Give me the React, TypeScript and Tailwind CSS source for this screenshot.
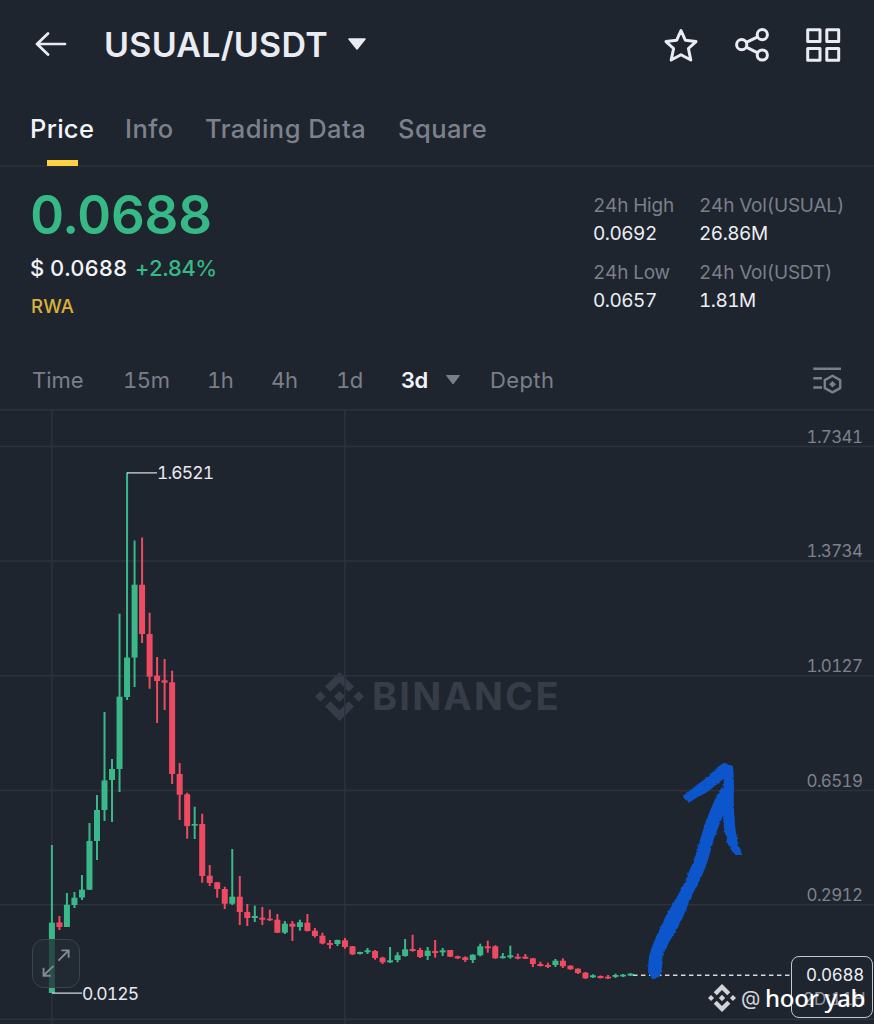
import React from "react";

type Candle = [up: 0 | 1, high: number, top: number, bottom: number, low: number];

const CANDLES: Candle[] = [
  [1, 845, 922.7, 993, 993], [0, 916, 922.5, 927, 930], [1, 893, 904.7, 927, 927], [1, 892, 897.7, 905, 908],
  [1, 875, 889.7, 897.5, 900], [1, 823, 841, 889.7, 890], [1, 795, 810, 841, 860], [1, 712, 780.5, 810, 821],
  [1, 759, 769, 780, 822], [1, 613.7, 696.7, 769, 792], [1, 472.5, 657.5, 697, 700], [1, 540.5, 584.7, 657.5, 687],
  [0, 537.5, 584.7, 634, 643], [0, 612.7, 634, 676.7, 688.7], [0, 657, 675.7, 681, 723], [0, 659, 680.3, 682.7, 710],
  [0, 670.7, 682.3, 774, 784], [0, 763, 774, 794.7, 820], [0, 792.7, 794.3, 826, 838.7], [1, 806.7, 824, 825.7, 839],
  [0, 813.7, 824, 876, 882.7], [0, 865, 875.7, 883, 886], [0, 882, 882.3, 889, 897.7], [0, 886.7, 889, 903.7, 909],
  [1, 849, 896.7, 903.7, 905], [0, 876, 896.7, 912, 925], [0, 904, 912, 918, 926], [1, 905.7, 916, 918, 922],
  [0, 907, 917.7, 919.7, 925], [0, 909.7, 918.7, 920.3, 921], [0, 914, 919.7, 932.7, 933], [1, 921, 923.7, 932.7, 934],
  [0, 921, 923.7, 926.7, 941], [1, 919.7, 922.3, 927, 930.7], [0, 914, 922.7, 931, 931.5], [0, 928, 930.7, 936, 937.5],
  [0, 932.7, 935.7, 943.5, 944.3], [0, 940, 943, 945, 948.7], [1, 939.7, 940, 944, 946], [0, 938, 940.3, 947, 948.7],
  [0, 946, 946.3, 954.3, 955], [1, 951.7, 952, 953.9, 954.5], [1, 948, 950.3, 952.2, 954], [0, 950, 951, 958, 959.7],
  [0, 956.7, 957.7, 962.3, 964], [1, 947, 960.3, 962.3, 963], [1, 952.3, 955.3, 960, 962.3], [1, 939, 949.3, 956, 956.7],
  [0, 934.7, 949, 951, 951.7], [0, 947.7, 950, 957, 958], [1, 947, 950.7, 956, 960], [0, 940, 951, 953, 957.7],
  [1, 948, 950.3, 952.3, 956], [0, 950, 950, 956.7, 957], [0, 955.7, 956.3, 958.3, 959], [0, 956.3, 957.3, 960, 962],
  [1, 954.3, 954.7, 960, 963], [1, 943.7, 946.3, 955.3, 956.3], [0, 940.7, 946.3, 948.3, 952.7], [0, 945.3, 946.3, 958.3, 958.7],
  [1, 953, 956.3, 958.2, 958.5], [1, 945.7, 955.3, 957.3, 958.7], [0, 953.7, 956.7, 958.5, 959.3], [0, 954, 956.7, 958.7, 959],
  [0, 958, 958.3, 964, 967], [0, 961.7, 964, 966, 966.5], [0, 962.7, 965, 966.9, 968], [1, 959, 960.7, 965, 967],
  [0, 958.3, 960.7, 966.3, 968], [0, 965.3, 965.7, 969.3, 969.7], [0, 968.3, 968.7, 973, 974], [0, 972, 972.7, 978.3, 979],
  [1, 974.3, 975.3, 977.3, 978], [0, 975.5, 976, 978.1, 978.5], [0, 975, 976.7, 978.5, 979], [1, 973.7, 975, 976.9, 978],
  [1, 974, 974.7, 976.4, 977], [1, 973, 973.7, 975.6, 976],
];

const GRID_Y = [446.5, 561, 675.7, 790.5, 904.7, 1019.3];
const AXIS: [string, number][] = [
  ["1.7341", 436.5], ["1.3734", 551], ["1.0127", 665.5], ["0.6519", 780.5], ["0.2912", 895],
];

const ARROW_SHAFT = "M649 973C649 965 649 959 651 953C655 940 662 926 668 914C674 904 679 896 684 886C689 876 692 866 696 857C699 848 701 839 704 830C708 818 713 806 718 795L722 789L728 792L724 811C720 820 717 828 713 838C710 850 707 862 702 873C699 880 696 885 693 891C688 903 683 915 677 927C672 936 666 944 663 953C662 961 661 969 659 976L654 978Z";
const ARROW_LEFT = "M684 796C691 792 697 785 704 781C710 777 715 769 721 766L725 763L732 768L730 775C723 776 715 785 707 791C701 794 694 798 688 802Z";
const ARROW_RIGHT = "M725 768L732 768C734 781 732 794 733 807C733 816 734 825 735 833C736 841 738 846 741 854L736 854C731 849 728 844 727 837C724 828 724 820 724 811Z";

function BinanceMark({ className }: { className: string }) {
  return (
    <svg viewBox="0 0 24 24" className={className} fill="currentColor">
      <path d="M12 0 19.1 7.1 16.5 9.7 12 5.2 7.5 9.7 4.9 7.1ZM12 24 4.9 16.9 7.5 14.3 12 18.8 16.5 14.3 19.1 16.9ZM0 12 2.6 9.4 5.2 12 2.6 14.6ZM18.8 12 21.4 9.4 24 12 21.4 14.6ZM9.3 12 12 9.3 14.7 12 12 14.7Z" />
    </svg>
  );
}

function Header() {
  return (
    <header className="flex h-[90px] shrink-0 items-center text-[#eaecf2]">
      <svg className="ml-[34px] h-[26px] w-[34px]" viewBox="34 32 34 26" fill="none" stroke="currentColor" strokeWidth="2.7" strokeLinecap="round" strokeLinejoin="round">
        <path d="M65 44H37M48 33.5 37 44 48 54.5" />
      </svg>
      <h1 className="ml-[36px] w-[232px] text-[34px] font-semibold leading-[40px] tracking-[0.25px] whitespace-nowrap">USUAL/USDT</h1>
      <svg className="ml-[11px] h-[14px] w-[20px]" viewBox="347 37.5 20 14">
        <path d="M349 38.5H365L357 48.5Z" fill="currentColor" stroke="currentColor" strokeWidth="1.5" strokeLinejoin="round" />
      </svg>
      <svg className="ml-auto h-[36px] w-[36px]" viewBox="663 27 36 36" fill="none" stroke="currentColor" strokeWidth="3" strokeLinejoin="round">
        <path d="M681 30.5 685.3 40.2 696 41.6 688.4 48.5 690.8 60 681 54.7 671.2 60 673.6 48.5 666 41.6 676.7 40.2Z" />
      </svg>
      <svg className="ml-[35px] h-[36px] w-[38px]" viewBox="734 27 38 36" fill="none" stroke="currentColor" strokeWidth="3">
        <circle cx="741.7" cy="44.7" r="5.1" />
        <circle cx="762.3" cy="34.7" r="5.1" />
        <circle cx="762.3" cy="55" r="5.1" />
        <path d="M746.3 42.3 757.7 36.8M746.3 47.1 757.7 52.8" />
      </svg>
      <svg className="mr-[32px] ml-[32px] h-[36px] w-[38px]" viewBox="804 27 38 36" fill="none" stroke="currentColor" strokeWidth="3" strokeLinejoin="round">
        <path d="M807.7 29.7H820V41.5H807.7ZM826.8 29.7H838.7V41.5H826.8ZM807.7 48.5H820V60.2H807.7ZM826.8 48.5H838.7V60.2H826.8Z" />
      </svg>
    </header>
  );
}

function Tabs() {
  return (
    <nav className="flex h-[77px] shrink-0 border-b-2 border-[#272d37] pl-[30px] text-[25.5px] leading-[77px] font-medium tracking-[0.45px] whitespace-nowrap text-[#7d818c]">
      <div className="relative w-[95px] tracking-[0.3px] text-[#f3f4f8]">
        Price
        <span className="absolute bottom-[-1px] left-[17px] h-[6px] w-[31px] bg-[#fcd244]" />
      </div>
      <div className="w-[80px]">Info</div>
      <div className="w-[193px]">Trading Data</div>
      <div>Square</div>
    </nav>
  );
}

function Stat({ label, value }: { label: string; value: string }) {
  return (
    <div className="h-[67px] whitespace-nowrap">
      <div className="h-[28px] text-[19px] leading-[28px] tracking-[-0.2px] text-[#7b7f8a]">{label}</div>
      <div className="h-[28px] text-[19px] leading-[28px] tracking-[-0.5px] text-[#eceef3]">{value}</div>
    </div>
  );
}

function Summary() {
  return (
    <section className="flex h-[184px] shrink-0 pl-[30px] whitespace-nowrap">
      <div className="w-[563px] pt-[18px]">
        <div className="h-[61px] text-[53px] leading-[61px] font-semibold tracking-[-0.7px] text-[#36b985]">0.0688</div>
        <div className="flex h-[45px] text-[22px] leading-[45px] font-medium">
          <span className="w-[105px] text-[#f3f4f8]">$ 0.0688</span>
          <span className="tracking-[-0.55px] text-[#36b985]">+2.84%</span>
        </div>
        <div className="ml-[1px] h-[30px] text-[18.5px] leading-[30px] font-medium tracking-[0.2px] text-[#dcb23c]">RWA</div>
      </div>
      <div className="flex pt-[25px]">
        <div className="w-[106px]">
          <Stat label="24h High" value="0.0692" />
          <Stat label="24h Low" value="0.0657" />
        </div>
        <div>
          <Stat label="24h Vol(USUAL)" value="26.86M" />
          <Stat label="24h Vol(USDT)" value="1.81M" />
        </div>
      </div>
    </section>
  );
}

function Intervals() {
  return (
    <nav className="flex h-[58px] shrink-0 items-center pl-[32px] text-[22px] leading-[58px] whitespace-nowrap text-[#7b7f8a]">
      <span className="w-[91px]">Time</span>
      <span className="w-[84px] tracking-[-0.4px]">15m</span>
      <span className="w-[64px] tracking-[-0.4px]">1h</span>
      <span className="w-[65px] tracking-[-0.2px]">4h</span>
      <span className="w-[65px] tracking-[-0.4px]">1d</span>
      <span className="w-[44px] font-semibold tracking-[-0.8px] text-[#f3f4f8]">3d</span>
      <svg className="h-[12px] w-[16px]" viewBox="0 0 16 12">
        <path d="M1.5 1.5H14.5L8 10Z" fill="currentColor" stroke="currentColor" strokeLinejoin="round" />
      </svg>
      <span className="ml-[29px] tracking-[0.4px]">Depth</span>
      <svg className="mr-[31px] ml-auto h-[30px] w-[31px]" viewBox="812 365 31 30" fill="none" stroke="currentColor" strokeWidth="2.4">
        <path d="M813.3 368.7H841M813.3 378.3H822M813.3 387.5H822" />
        <path d="M832.5 375.8 840.2 380.1V388.1L832.5 392.4 824.8 388.1V380.1Z" strokeLinejoin="round" />
        <path d="M832.5 380.9 835.9 384.2 832.5 387.5 829.1 384.2Z" fill="currentColor" stroke="none" />
      </svg>
    </nav>
  );
}

function Chart() {
  return (
    <section className="relative h-[615px] shrink-0 overflow-hidden">
      <div className="absolute top-[263px] left-[315px] flex items-center text-[#373d48]">
        <BinanceMark className="h-[49px] w-[49px]" />
        <span className="ml-[8px] text-[38px] leading-[49px] font-bold tracking-[2.2px]">BINANCE</span>
      </div>
      <svg className="absolute inset-0 h-[615px] w-[874px] font-['Inter',sans-serif]" viewBox="0 409 874 615">
        <defs>
          <filter id="brush" x="-10%" y="-10%" width="120%" height="120%">
            <feTurbulence type="fractalNoise" baseFrequency="0.2" numOctaves="2" seed="4" result="noise" />
            <feDisplacementMap in="SourceGraphic" in2="noise" scale="3" xChannelSelector="R" yChannelSelector="G" />
            <feGaussianBlur stdDeviation="0.7" />
          </filter>
        </defs>
        <g stroke="#2d333e" strokeWidth="1.5">
          <path d="M0 409.8H874" />
          {GRID_Y.map((y) => <path key={y} d={`M0 ${y}H874`} />)}
          <path d="M51.8 409V1024M344.8 409V1024" />
        </g>
        {CANDLES.map(([up, high, top, bottom, low], i) => {
          const x = 51.9 + i * 7.515;
          return (
            <g key={i} fill={up ? "#3ab88a" : "#ee4a62"}>
              <rect x={x - 1} y={high} width="2" height={low - high} />
              <rect x={x - 3} y={top} width="6" height={bottom - top} />
            </g>
          );
        })}
        <path d="M127 472.8H157M52 993.2H82" stroke="#d5d8e0" strokeWidth="1.3" />
        <g fill="#e8eaf0" fontSize="17.5">
          <text x="157" y="479" textLength="57">1.6521</text>
          <text x="82" y="1000" textLength="57">0.0125</text>
        </g>
        <g fill="#7d818c" fontSize="17">
          {AXIS.map(([label, y]) => <text key={label} x="806.5" y={y + 6} textLength="56.5">{label}</text>)}
        </g>
        <path d="M633 975.3H792" stroke="#d5d8e0" strokeWidth="1.4" strokeDasharray="4.5 3.5" />
        <g filter="url(#brush)" fill="#0b55cb" stroke="#0b55cb" strokeWidth="2" strokeLinejoin="round">
          <path d={ARROW_SHAFT} />
          <path d={ARROW_LEFT} />
          <path d={ARROW_RIGHT} />
        </g>
      </svg>
      <div className="absolute top-[530px] left-[32px] h-[49px] w-[48px] rounded-[12px] border-[1.5px] border-[#3d434d] bg-[#232b34]/75">
        <svg className="h-full w-full" viewBox="32 940 48 48" fill="none" stroke="#858992" strokeWidth="2">
          <path d="M58.5 961 69 950.5M61.5 950.3H69.2V958M53.5 966.5 43 976.5M43 968.5V976.7H50.5" />
        </svg>
      </div>
      <div className="absolute top-[547px] left-[791px] h-[62px] w-[82px] rounded-[8px] border-[1.5px] border-[#c5c8d0] bg-[#1f252f] text-[17px] text-[#eceef3]">
        <div className="mt-[6px] ml-[14px] h-[24px] leading-[24px] tracking-[-0.3px]">0.0688</div>
        <div className="ml-[11px] h-[24px] leading-[24px] text-[#8f929b]">2D:11H</div>
      </div>
      <div className="absolute top-[574px] left-[708px] flex h-[30px] items-center whitespace-nowrap text-white">
        <BinanceMark className="h-[28px] w-[28px] text-[#d2d4d7]" />
        <span className="ml-[5px] w-[24px] text-[20px] leading-[30px] text-[#d2d4d7]">@</span>
        <span className="font-['Noto_Sans',sans-serif] text-[24px] leading-[30px] font-medium tracking-[-0.25px]">hoor yab</span>
      </div>
    </section>
  );
}

export default function App() {
  return (
    <main className="flex h-[1024px] w-[874px] flex-col overflow-hidden bg-[#1f252f] font-['Inter',sans-serif] tabular-nums">
      <Header />
      <Tabs />
      <Summary />
      <Intervals />
      <Chart />
    </main>
  );
}
